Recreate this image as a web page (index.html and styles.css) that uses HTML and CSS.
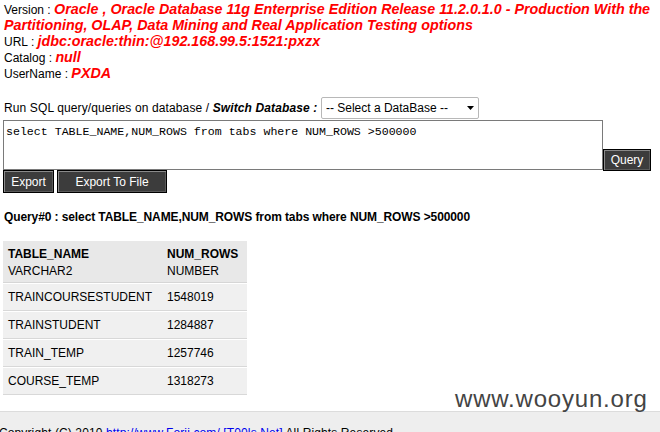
FILE: index.html
```html
<!DOCTYPE html>
<html>
<head>
<meta charset="utf-8">
<link rel="stylesheet" href="styles.css">
</head>
<body>
<div class="page">
  <div class="info">
    <div class="line">Version : <span class="val">Oracle , Oracle Database 11g Enterprise Edition Release 11.2.0.1.0 - Production With the Partitioning, OLAP, Data Mining and Real Application Testing options</span></div>
    <div class="line">URL : <span class="val">jdbc:oracle:thin:@192.168.99.5:1521:pxzx</span></div>
    <div class="line">Catalog : <span class="val">null</span></div>
    <div class="line">UserName : <span class="val">PXDA</span></div>
  </div>

  <form class="qform">
    <div class="runrow">Run SQL query/queries on database / <b class="sw">Switch Database :</b> <span class="selwrap"><select class="dbsel"><option>-- Select a DataBase --</option></select><svg class="arrow" width="7" height="4" viewBox="0 0 7 4"><path d="M0 0H7L3.5 4Z" fill="#000"/></svg></span></div>
    <div class="qrow">
      <textarea class="sql">select TABLE_NAME,NUM_ROWS from tabs where NUM_ROWS >500000</textarea>
      <button type="button" class="btn btn-query">Query</button>
    </div>
    <div class="exports">
      <button type="button" class="btn btn-export">Export</button>
      <button type="button" class="btn btn-file">Export To File</button>
    </div>
  </form>

  <div class="qtitle">Query#0 : select TABLE_NAME,NUM_ROWS from tabs where NUM_ROWS &gt;500000</div>

  <table class="result">
    <thead>
      <tr><th class="c1"><b>TABLE_NAME</b><br><span>VARCHAR2</span></th><th class="c2"><b>NUM_ROWS</b><br><span>NUMBER</span></th></tr>
    </thead>
    <tbody>
      <tr><td>TRAINCOURSESTUDENT</td><td>1548019</td></tr>
      <tr><td>TRAINSTUDENT</td><td>1284887</td></tr>
      <tr><td>TRAIN_TEMP</td><td>1257746</td></tr>
      <tr><td>COURSE_TEMP</td><td>1318273</td></tr>
    </tbody>
  </table>
</div>

<div class="footer">Copyright (C) 2010 <a href="#">http://www.Forjj.com/</a> <a href="#">[T00ls.Net]</a> All Rights Reserved.</div>

<div class="watermark">www.wooyun.org</div>
</body>
</html>
```
FILE: styles.css
```css
html, body {
  margin: 0;
  padding: 0;
  background: #fff;
}
body {
  font-family: "Liberation Sans", Arial, sans-serif;
  font-size: 12px;
  color: #000;
  position: relative;
  width: 660px;
  height: 432px;
  overflow: hidden;
}
.page {
  padding: 2px 0 0 3px;
}
.info {
  padding-left: 1px;
  line-height: 16px;
}
.val {
  color: #f00;
  font-weight: bold;
  font-style: italic;
  font-size: 14.3px;
  line-height: 15px;
}
.qform {
  margin: 0;
}
.runrow {
  margin-top: 15px;
  padding-left: 1px;
  line-height: 22px;
  height: 23px;
  letter-spacing: 0.12px;
}
.sw {
  font-style: italic;
}
.selwrap {
  position: relative;
  display: inline-block;
  vertical-align: baseline;
  letter-spacing: 0;
}
.dbsel {
  -webkit-appearance: none;
  appearance: none;
  width: 158px;
  height: 22px;
  border: 1px solid #b8b8b8;
  border-radius: 2px;
  background: #fff;
  font-family: "Liberation Sans", Arial, sans-serif;
  font-size: 12px;
  color: #000;
  padding: 0 0 0 4px;
  margin: 0;
}
.arrow {
  position: absolute;
  right: 5px;
  top: 9px;
}
.qrow {
  display: flex;
  align-items: flex-end;
}
.sql {
  width: 600px;
  height: 50px;
  box-sizing: border-box;
  border: 1px solid #7a7a7a;
  margin: 0;
  padding: 4px 2px 2px;
  font-family: "Liberation Mono", "Courier New", monospace;
  font-size: 11.6px;
  line-height: 14px;
  resize: none;
  outline: none;
  overflow: hidden;
}
.btn {
  box-sizing: border-box;
  height: 22px;
  background: #3c3c3c;
  color: #fff;
  border: 1px solid #000;
  box-shadow: inset 1px 1px 0 #8a8a8a, inset -1px -1px 0 #5a5a5a;
  font-family: "Liberation Sans", Arial, sans-serif;
  font-size: 12px;
  padding: 0;
  margin: 0;
  text-align: center;
}
.btn-query {
  width: 48px;
  margin-bottom: -1px;
}
.exports {
  display: flex;
  gap: 3px;
}
.btn-export {
  width: 51px;
  height: 23px;
}
.btn-file {
  width: 110px;
  height: 23px;
}
.qtitle {
  margin-top: 16px;
  padding-left: 1px;
  font-weight: bold;
  line-height: 16px;
  letter-spacing: -0.1px;
}
.result {
  margin-top: 15px;
  width: 244px;
  border-collapse: separate;
  border-spacing: 0 1px;
}
.result th {
  text-align: left;
  background: #e8e8e8;
  padding: 5px 5px 2px;
  line-height: 17px;
  font-weight: normal;
  border-bottom: 1px solid #d6d6d6;
  vertical-align: top;
}
.result th.c1 {
  width: 149px;
}
.result td {
  background: #f0f0f0;
  padding: 5px 5px;
  line-height: 16px;
  border-bottom: 1px solid #d8d8d8;
}
.footer {
  position: absolute;
  left: 0;
  right: 0;
  top: 411px;
  height: 21px;
  box-sizing: border-box;
  overflow: hidden;
  background: #eeeeee;
  border-top: 1px solid #dcdcdc;
  padding: 13px 0 0 0;
  text-indent: -1px;
  line-height: 16px;
  font-size: 12px;
  letter-spacing: 0.12px;
  white-space: nowrap;
}
.footer a {
  color: #0000ee;
  text-decoration: none;
}
.watermark {
  position: absolute;
  left: 455px;
  top: 387px;
  font-family: "Liberation Sans", Arial, sans-serif;
  font-size: 24px;
  letter-spacing: 0.8px;
  color: #444;
  line-height: 24px;
}
```
